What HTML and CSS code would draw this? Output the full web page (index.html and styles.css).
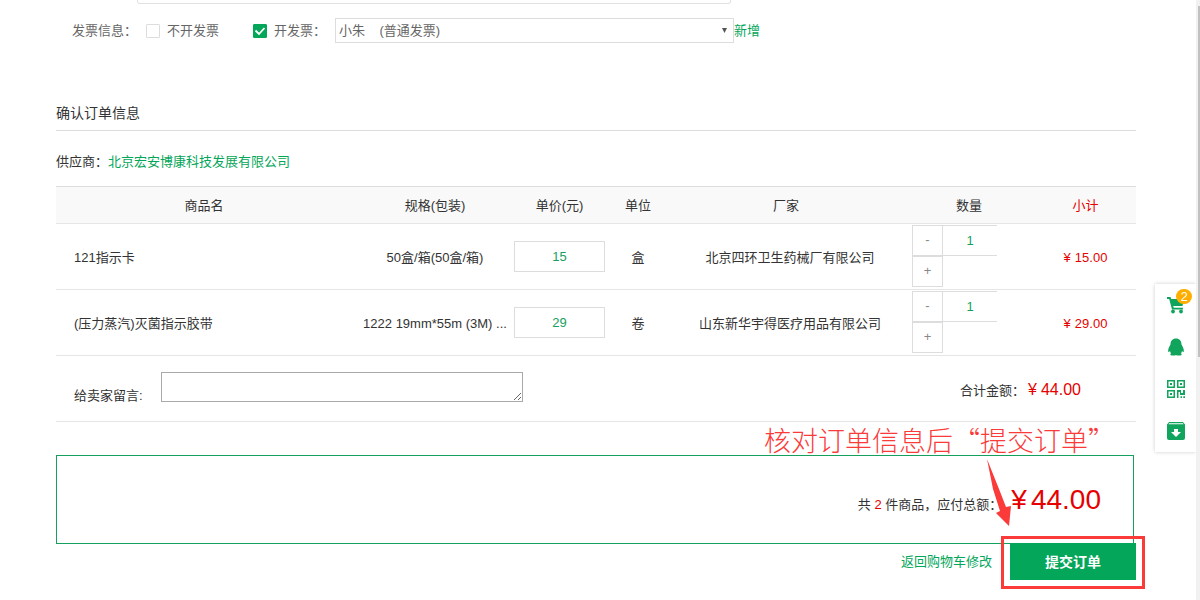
FILE: index.html
```html
<!DOCTYPE html>
<html lang="zh-CN">
<head>
<meta charset="utf-8">
<title>确认订单</title>
<link rel="stylesheet" href="styles.css">
</head>
<body>
<main class="page">
  <div class="address-box"></div>
  <form class="invoice">
    <span class="invoice-title">发票信息<span class="mark">：</span></span>
    <label class="choice choice-none"><input class="check" type="checkbox">不开发票</label>
    <label class="choice choice-need"><input class="check" type="checkbox" checked><span>开发票<span class="mark">：</span></span></label>
    <span class="select-wrap">
      <select class="select" aria-label="发票"><option>小朱&nbsp;&nbsp;&nbsp;&nbsp;(普通发票)</option></select>
      <svg class="caret" viewBox="0 0 6 6" aria-hidden="true"><path d="M0 0h6L3 6z"/></svg>
    </span>
    <a class="link" href="#">新增</a>
  </form>

  <h2 class="section-title">确认订单信息</h2>
  <p class="supplier">供应商<span class="mark">：</span><a class="link" href="#">北京宏安博康科技发展有限公司</a></p>

  <table class="goods">
    <colgroup><col class="c-name"><col class="c-spec"><col class="c-price"><col class="c-unit"><col class="c-maker"><col class="c-count"><col class="c-sum"></colgroup>
    <thead>
      <tr><th>商品名</th><th class="spec">规格(包装)</th><th>单价(元)</th><th>单位</th><th>厂家</th><th>数量</th><th class="sum">小计</th></tr>
    </thead>
    <tbody>
      <tr>
        <td class="name">121指示卡</td>
        <td class="spec">50盒/箱(50盒/箱)</td>
        <td class="field"><input class="price" type="text" value="15" aria-label="单价"></td>
        <td>盒</td>
        <td class="maker">北京四环卫生药械厂有限公司</td>
        <td class="count"><div class="stepper"><button class="step" type="button">-</button><input class="qty" type="text" value="1" aria-label="数量"><button class="step" type="button">+</button></div></td>
        <td class="sum"><span class="yen">¥</span>15.00</td>
      </tr>
      <tr>
        <td class="name">(压力蒸汽)灭菌指示胶带</td>
        <td class="spec">1222 19mm*55m (3M) ...</td>
        <td class="field"><input class="price" type="text" value="29" aria-label="单价"></td>
        <td>卷</td>
        <td class="maker">山东新华宇得医疗用品有限公司</td>
        <td class="count"><div class="stepper"><button class="step" type="button">-</button><input class="qty" type="text" value="1" aria-label="数量"><button class="step" type="button">+</button></div></td>
        <td class="sum"><span class="yen">¥</span>29.00</td>
      </tr>
    </tbody>
  </table>

  <div class="message-row">
    <label class="message-label" for="message">给卖家留言:</label>
    <textarea class="message" id="message"></textarea>
    <div class="subtotal"><span>合计金额<span class="mark">：</span></span><span class="subtotal-value"><span class="yen">¥</span>44.00</span></div>
  </div>

  <div class="total">
    <span>共 <span class="red">2</span> 件商品<span class="mark">，</span>应付总额<span class="mark">：</span></span>
    <span class="total-value"><span class="yen">¥</span>44.00</span>
  </div>

  <div class="actions">
    <a class="link" href="#">返回购物车修改</a>
    <button class="submit" type="submit">提交订单</button>
    <div class="frame"></div>
    <div class="note">核对订单信息后“提交订单<span class="quote-end">”</span></div>
    <svg class="arrow" viewBox="0 0 26 68" aria-hidden="true"><path d="M2 0L14 30L21 48L26 47L24 67L11 54L15 52L8 30Z" fill="#fb3a3a"/></svg>
  </div>
</main>

<nav class="side" aria-label="快捷工具">
  <a class="side-item" href="#" aria-label="购物车">
    <svg class="side-icon" viewBox="0 0 18 18"><path d="M0 1h3.500l.8 2H17l-1.500 7H6.200l.5 1.700H16v1.800H5L2.200 3H0z"/><circle cx="6" cy="15.500" r="1.900"/><circle cx="14" cy="15.500" r="1.900"/></svg>
    <span class="badge">2</span>
  </a>
  <a class="side-item" href="#" aria-label="客服">
    <svg class="side-icon" viewBox="0 0 18 18"><path d="M9 .5C5.500.500 3.500 3 3.500 6.500C2.500 8 .8 11 1.200 13.500c.2 1 1 .6 1.800-.5c.2 1 .4 1.600 1 2.200c-1.200 1-.7 2.300.8 2.300H8l1-.5l1 .5h3.200c1.500 0 2-1.300.8-2.300c.6-.6.8-1.200 1-2.200c.8 1.100 1.600 1.500 1.800.5C17.200 11 15.500 8 14.500 6.500C14.500 3 12.500.500 9 .5z"/></svg>
  </a>
  <a class="side-item" href="#" aria-label="二维码">
    <svg class="side-icon" viewBox="0 0 18 18"><path fill-rule="evenodd" d="M0 0h8v8H0zM1.500 1.500v5h5v-5zM3 3h2v2H3zM10 0h8v8h-8zM11.500 1.500v5h5v-5zM13 3h2v2h-2zM0 10h8v8H0zM1.500 11.500v5h5v-5zM3 13h2v2H3zM10 10h4v3h2v-3h2v5h-5v-3h-1.500v6H10zM13.500 16.200H15V18h-1.500zM16.300 16.200H18V18h-1.700z"/></svg>
  </a>
  <a class="side-item" href="#" aria-label="收藏">
    <svg class="side-icon" viewBox="0 0 18 18"><path fill-rule="evenodd" d="M2 0h14l2 2.500V16a2 2 0 0 1-2 2H2a2 2 0 0 1-2-2V2.500zM2 1.300L1.500 2.300h15L16 1.300zM7 7v3H4l5 5l5-5h-3V7z"/></svg>
  </a>
</nav>
<div class="scroll-track"><div class="scroll-thumb"></div></div>
</body>
</html>
```

FILE: styles.css
```css
* { box-sizing: border-box; }

body {
  margin: 0;
  background: #fff;
  color: #333;
  font: 13px/20px "Liberation Sans", "Noto Sans CJK SC", sans-serif;
}

input, select, textarea, button { font: inherit; }

.page {
  min-height: 100vh;
  padding: 0 64px 8px 56px;
}

.link { color: #04a65a; text-decoration: none; }
.red { color: #e60000; }
.yen { margin-right: 4px; }
.mark { font-family: "Noto Sans CJK TC", sans-serif; line-height: 1; }

.address-box {
  width: 55%;
  height: 4px;
  margin-left: 81px;
  border: 1px solid #e2e2e2;
  border-top: 0;
  border-radius: 0 0 3px 3px;
}

.invoice {
  display: flex;
  align-items: center;
  margin-top: 14px;
  padding-left: 16px;
  color: #666;
}
.invoice-title { width: 74px; }
.choice { display: flex; align-items: center; gap: 7px; }
.choice-none { width: 107px; }
.choice-need { width: 82px; white-space: nowrap; }
.check {
  appearance: none;
  width: 14px;
  height: 14px;
  margin: 0;
  border: 1px solid #ddd;
  border-radius: 1px;
  background: #fff;
}
.check:checked {
  border-color: #04a65a;
  background: #04a65a url("data:image/svg+xml,%3Csvg xmlns='http://www.w3.org/2000/svg' viewBox='0 0 12 12'%3E%3Cpath d='M1.500 5.500L5 9L10.500 3' fill='none' stroke='white' stroke-width='1.800'/%3E%3C/svg%3E");
}
.select-wrap { position: relative; width: 399px; }
.select {
  display: block;
  appearance: none;
  width: 100%;
  height: 25px;
  padding: 0 3px;
  border: 1px solid #ddd;
  border-radius: 0;
  background: #fff;
  color: #666;
}
.caret {
  position: absolute;
  top: 10px;
  right: 7px;
  width: 5px;
  height: 5px;
  fill: #555;
}

.section-title {
  margin: 60px 0 0;
  padding-bottom: 7px;
  border-bottom: 1px solid #ddd;
  font-size: 14px;
  font-weight: 400;
}
.supplier { margin: 21px 0 14px; }

.goods {
  width: 100%;
  border-collapse: separate;
  border-spacing: 0;
  table-layout: fixed;
  text-align: center;
}
.c-name { width: 296px; }
.c-spec { width: 160px; }
.c-price { width: 95px; }
.c-unit { width: 62px; }
.c-maker { width: 234px; }
.c-count { width: 132px; }
.c-sum { width: 101px; }
.goods th {
  height: 38px;
  padding: 1px 0 0;
  border-top: 1px solid #ddd;
  border-bottom: 1px solid #e6e6e6;
  background: #f9f9f9;
  font-weight: 400;
}
.goods td {
  height: 66px;
  padding: 2px 0 0;
  border-bottom: 1px solid #e6e6e6;
}
.goods .name { padding-left: 18px; text-align: left; }
.goods .spec { padding-left: 6px; white-space: nowrap; }
.goods .sum { color: #e60000; }
.goods .field { padding: 0; }
.goods .maker { padding-left: 8px; }
.goods .count { padding: 1px 0 0 9px; vertical-align: top; }

.price {
  display: block;
  width: 91px;
  height: 31px;
  margin: 0 auto;
  border: 1px solid #ddd;
  color: #16a05d;
  text-align: center;
}
.stepper {
  display: grid;
  grid-template-columns: 31px 54px;
  grid-template-rows: 31px 31px;
}
.step {
  padding: 0 0 2px;
  border: 1px solid #ddd;
  background: #fff;
  color: #888;
}
.qty {
  width: 100%;
  border: 1px solid #ddd;
  border-width: 1px 0;
  color: #16a05d;
  text-align: center;
}

.message-row {
  display: flex;
  align-items: flex-start;
  height: 66px;
  padding: 16px 55px 0 18px;
  border-bottom: 1px solid #e6e6e6;
}
.message-label { width: 87px; padding-top: 14px; }
.message {
  width: 362px;
  height: 30px;
  border: 1px solid #a9a9a9;
  resize: both;
}
.subtotal {
  display: flex;
  align-items: baseline;
  gap: 3px;
  margin: 8px 0 0 auto;
}
.subtotal-value { color: #e60000; font-size: 16px; }

.total {
  display: flex;
  align-items: baseline;
  justify-content: flex-end;
  gap: 9px;
  height: 89px;
  margin: 33px 2px 0 0;
  padding: 24px 32px 0 0;
  border: 1px solid #16a05d;
}
.total-value {
  color: #e60000;
  font-size: 28px;
  line-height: 40px;
}

.actions {
  position: relative;
  display: flex;
  align-items: center;
  justify-content: flex-end;
  gap: 18px;
  margin-top: -1px;
}
.submit {
  width: 126px;
  height: 37px;
  padding: 0;
  border: 0;
  background: #04a65a;
  color: #fff;
  font-size: 14px;
  font-weight: 700;
}
.frame {
  position: absolute;
  top: -7px;
  right: -9px;
  width: 144px;
  height: 53px;
  border: 3px solid #fb3a3a;
}
.note {
  position: absolute;
  right: 21px;
  bottom: 120px;
  color: #fb3a3a;
  font: 300 27px/40px "Noto Sans CJK SC", sans-serif;
  white-space: nowrap;
}
.arrow {
  position: absolute;
  right: 125px;
  bottom: 53px;
  width: 26px;
  height: 68px;
}

.side {
  position: fixed;
  top: 284px;
  right: 4px;
  display: flex;
  flex-direction: column;
  width: 41px;
  background: #fff;
  box-shadow: 0 0 4px rgba(0, 0, 0, 0.2);
}
.side-item {
  position: relative;
  display: flex;
  align-items: center;
  justify-content: center;
  height: 42px;
}
.side-icon { width: 18px; height: 18px; fill: #11a45c; }
.badge {
  position: absolute;
  top: 5px;
  right: 4px;
  width: 16px;
  height: 15px;
  border-radius: 8px;
  background: #ffae00;
  color: #fff;
  font-size: 13px;
  line-height: 15px;
  text-align: center;
}

.scroll-track {
  position: fixed;
  top: 0;
  right: 0;
  bottom: 0;
  width: 4px;
  padding: 6px 0 0 2px;
  background: #f1f1f1;
}
.scroll-thumb { height: 351px; background: #c1c1c1; }
```
